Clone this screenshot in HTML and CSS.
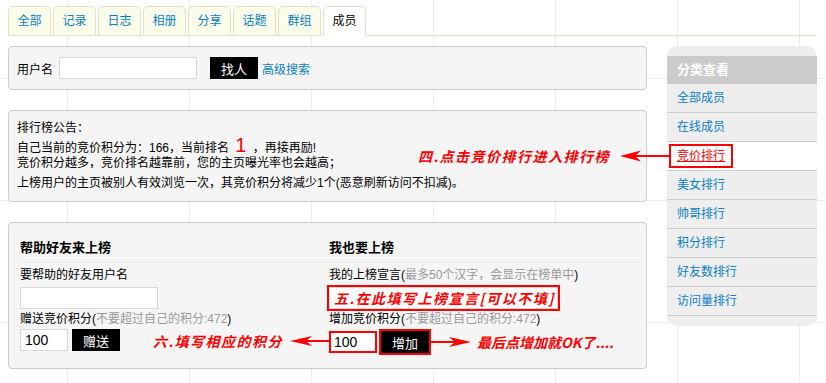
FILE: index.html
```html
<!DOCTYPE html>
<html lang="zh-CN">
<head>
  <meta charset="UTF-8" />
  <title>成员 - 竞价排行</title>
  <link rel="stylesheet" href="styles.css">
</head>
<body>
  <div class="page">
    <ul class="tabs">
      <li><a href="#">全部</a></li>
      <li><a href="#">记录</a></li>
      <li><a href="#">日志</a></li>
      <li><a href="#">相册</a></li>
      <li><a href="#">分享</a></li>
      <li><a href="#">话题</a></li>
      <li><a href="#">群组</a></li>
      <li class="current"><a href="#">成员</a></li>
    </ul>

    <div class="layout">
      <div class="main">
        <form class="box search-box">
          <label for="username">用户名</label>
          <input type="text" id="username" class="text-input user-input">
          <button type="button" class="btn">找人</button>
          <a href="#" class="adv-link">高级搜索</a>
        </form>

        <div class="box notice-box">
          <p>排行榜公告：</p>
          <p>自己当前的竞价积分为：166，当前排名 <span class="rank-num">1</span> ，再接再励!<br>竞价积分越多，竞价排名越靠前，您的主页曝光率也会越高；</p>
          <p>上榜用户的主页被别人有效浏览一次，其竞价积分将减少1个(恶意刷新访问不扣减)。</p>

          <!-- annotation -->
          <span class="note note-four">四.点击竞价排行进入排行榜</span>
          <svg class="arrow arrow-four" width="49" height="12" viewBox="0 0 49 12">
            <line x1="14" y1="6" x2="49" y2="6" stroke="#f00" stroke-width="2"/>
            <path d="M0 6 L21 0.5 L15 6 L21 11.5 Z" fill="#f00"/>
          </svg>
        </div>

        <div class="box rank-box">
          <div class="col col-left">
            <h3>帮助好友来上榜</h3>
            <p class="field-label">要帮助的好友用户名</p>
            <input type="text" class="text-input friend-input">
            <p class="field-label">赠送竞价积分(<span class="hint">不要超过自己的积分:472</span>)</p>
            <div class="row">
              <input type="text" class="text-input num-input" value="100">
              <button type="button" class="btn">赠送</button>
            </div>
          </div>

          <div class="col col-right">
            <h3>我也要上榜</h3>
            <p class="field-label">我的上榜宣言(<span class="hint">最多50个汉字，会显示在榜单中</span>)</p>
            <div class="slogan-wrap">
              <input type="text" class="text-input slogan-input">
              <span class="note note-five">五.在此填写上榜宣言[可以不填]</span>
            </div>
            <p class="field-label">增加竞价积分(<span class="hint">不要超过自己的积分:472</span>)</p>
            <div class="row">
              <input type="text" class="text-input num-input marked-input" value="100">
              <span class="btn-mark"><button type="button" class="btn">增加</button></span>
              <svg class="arrow" width="40" height="12" viewBox="0 0 40 12">
                <line x1="0" y1="6" x2="26" y2="6" stroke="#f00" stroke-width="2"/>
                <path d="M40 6 L18 1 L24 6 L18 11 Z" fill="#f00"/>
              </svg>
              <span class="note note-last">最后点增加就OK了....</span>
            </div>
          </div>

          <!-- annotation -->
          <span class="note note-six">六.填写相应的积分</span>
          <svg class="arrow arrow-six" width="40" height="12" viewBox="0 0 40 12">
            <line x1="14" y1="6" x2="40" y2="6" stroke="#f00" stroke-width="2"/>
            <path d="M0 6 L22 1 L16 6 L22 11 Z" fill="#f00"/>
          </svg>
        </div>
      </div>

      <div class="side">
        <h2 class="side-title">分类查看</h2>
        <ul class="side-menu">
          <li><a href="#">全部成员</a></li>
          <li><a href="#">在线成员</a></li>
          <li class="current"><a href="#"><span class="side-mark">竞价排行</span></a></li>
          <li><a href="#">美女排行</a></li>
          <li><a href="#">帅哥排行</a></li>
          <li><a href="#">积分排行</a></li>
          <li><a href="#">好友数排行</a></li>
          <li><a href="#">访问量排行</a></li>
        </ul>
      </div>
    </div>
  </div>
</body>
</html>
```

FILE: styles.css
```css
* {
  margin: 0;
  padding: 0;
  box-sizing: border-box;
}

body {
  font-family: "Liberation Sans", "Noto Sans CJK SC", sans-serif;
  font-size: 12px;
  color: #000;
  background-color: #fff;
  background-image:
    linear-gradient(#ececec 1px, transparent 1px),
    linear-gradient(90deg, #ececec 1px, transparent 1px);
  background-size: 122px 122px;
  background-position: 67px 78px;
}

a {
  color: #0a80c8;
  text-decoration: none;
}

.page {
  width: 826px;
  padding: 6px 0 0 8px;
}

/* tabs */
.tabs {
  list-style: none;
  display: flex;
  gap: 2px;
  width: 809px;
  height: 30px;
  border-bottom: 1px solid #e6dfc3;
}

.tabs li {
  width: 43px;
  height: 30px;
  background: #f9fde9;
  border: 1px solid #e6dfc3;
  border-radius: 5px 5px 0 0;
  text-align: center;
  line-height: 28px;
}

.tabs li.current {
  background: #fff;
  border-bottom-color: #fff;
}

.tabs li.current a {
  color: #000;
}

.layout {
  display: flex;
  align-items: flex-start;
  gap: 20px;
  margin-top: 10px;
}

.main {
  width: 639px;
}

.box {
  position: relative;
  background: #f5f5f5;
  border: 1px solid #ccc;
  border-radius: 4px;
}

.box + .box {
  margin-top: 20px;
}

/* search */
.search-box {
  display: flex;
  align-items: center;
  padding: 10px 8px;
}

.text-input {
  height: 22px;
  border: 1px solid #d9d9d9;
  background: #fff;
  font-family: "Liberation Sans", sans-serif;
  font-size: 14px;
  padding: 0 4px;
  outline: none;
}

.user-input {
  width: 138px;
  margin-left: 6px;
}

.btn {
  width: 48px;
  height: 22px;
  background: #000;
  color: #fff;
  border: none;
  font-family: "Liberation Sans", "Noto Sans CJK SC", sans-serif;
  font-size: 13px;
  cursor: pointer;
}

.search-box .btn {
  margin-left: 13px;
}

.adv-link {
  margin-left: 4px;
}

/* notice */
.notice-box {
  padding: 10px 8px;
  line-height: 15px;
}

.notice-box p + p {
  margin-top: 5px;
}

.rank-num {
  color: #f00;
  font-size: 20px;
  line-height: 0;
  padding: 0 3px;
}

/* rank forms */
.rank-box {
  display: flex;
  padding: 17px 3px 13px 11px;
}

.col-left {
  width: 309px;
}

.col-right {
  flex: 1;
}

.col h3 {
  font-size: 13px;
  line-height: 15px;
  padding-bottom: 7px;
  border-bottom: 1px solid #eaeaea;
  margin-bottom: 5px;
}

.field-label {
  line-height: 15px;
}

.text-input + .field-label,
.slogan-wrap + .field-label {
  margin-top: 3px;
}

.field-label + .text-input,
.field-label + .slogan-wrap {
  margin-top: 4px;
}

.hint {
  color: #999;
}

.friend-input {
  width: 138px;
}

.row {
  display: flex;
  align-items: center;
  margin-top: 2px;
}

.num-input {
  width: 48px;
}

.col-left .row .btn {
  margin-left: 4px;
}

.slogan-wrap {
  position: relative;
  width: 229px;
  height: 22px;
  outline: 2px solid #f00;
}

.slogan-input {
  width: 100%;
}

.marked-input {
  border: 2px solid #f00;
  padding-left: 3px;
}

.btn-mark {
  display: flex;
  margin-left: 2px;
  border: 2px solid #f00;
}

/* red annotations */
.note {
  color: #f00;
  font-family: "Noto Sans CJK SC", sans-serif;
  font-size: 14px;
  font-weight: 700;
  font-style: italic;
  line-height: 16px;
  letter-spacing: 1.5px;
  white-space: nowrap;
}

.arrow {
  display: block;
}

.note-four {
  position: absolute;
  left: 409px;
  top: 37px;
}

.arrow-four {
  position: absolute;
  left: 611px;
  top: 39px;
}

.note-five {
  position: absolute;
  left: 5px;
  top: 3px;
}

.note-six {
  position: absolute;
  left: 144px;
  top: 110px;
}

.arrow-six {
  position: absolute;
  left: 281px;
  top: 112px;
}

.note-last {
  margin-left: 6px;
  letter-spacing: 0;
}

/* sidebar */
.side {
  width: 150px;
  background: #eee;
  border-radius: 10px;
  padding: 10px 0;
}

.side-title {
  height: 28px;
  line-height: 28px;
  padding-left: 10px;
  background: #cbcbcb;
  color: #fff;
  font-size: 13px;
  font-weight: 700;
}

.side-menu {
  list-style: none;
}

.side-menu li {
  height: 29px;
  line-height: 28px;
  padding-left: 10px;
  border-bottom: 1px solid #ccc;
}

.side-menu li.current {
  background: #fff;
}

.side-mark {
  display: inline-block;
  margin-left: -8px;
  padding: 0 6px;
  line-height: 20px;
  border: 2px solid #f00;
  color: #f00;
  text-decoration: underline;
}
```
